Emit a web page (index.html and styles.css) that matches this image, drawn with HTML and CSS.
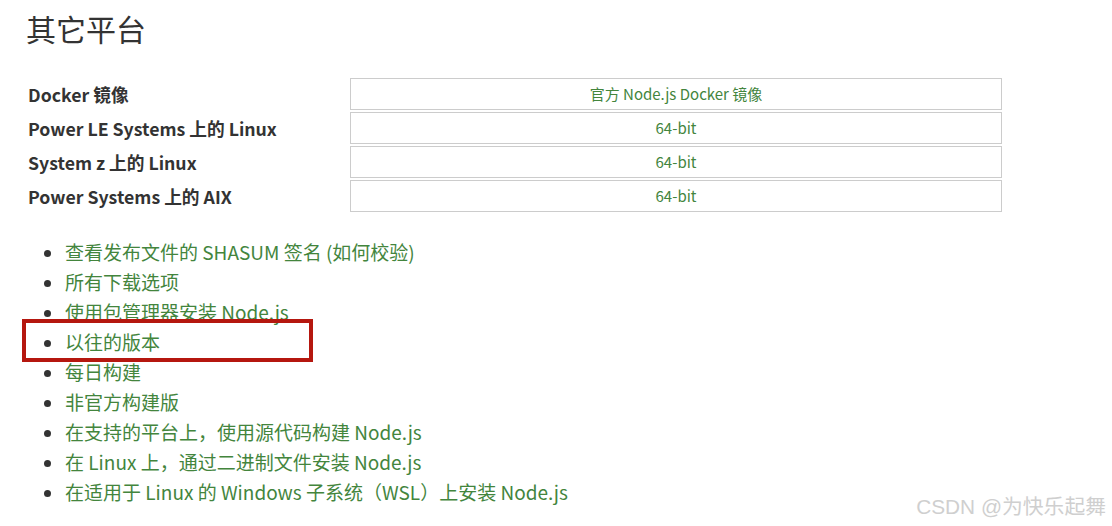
FILE: index.html
```html
<!DOCTYPE html>
<html lang="zh-CN">
<head>
  <meta charset="UTF-8" />
  <title>其它平台</title>
  <link rel="stylesheet" href="styles.css">
</head>
<body>
  <div class="page">
    <h1 class="title">其它平台</h1>

    <div class="platforms">
      <div class="label">Docker 镜像</div>
      <a class="cell" href="#">官方 Node.js Docker 镜像</a>

      <div class="label">Power LE Systems 上的 Linux</div>
      <a class="cell" href="#">64-bit</a>

      <div class="label">System z 上的 Linux</div>
      <a class="cell" href="#">64-bit</a>

      <div class="label">Power Systems 上的 AIX</div>
      <a class="cell" href="#">64-bit</a>
    </div>

    <ul class="links">
      <li><a href="#">查看发布文件的 SHASUM 签名 (如何校验)</a></li>
      <li><a href="#">所有下载选项</a></li>
      <li><a href="#">使用包管理器安装 Node.js</a></li>
      <li class="marked"><a href="#">以往的版本</a></li>
      <li><a href="#">每日构建</a></li>
      <li><a href="#">非官方构建版</a></li>
      <li><a href="#">在支持的平台上，使用源代码构建 Node.js</a></li>
      <li><a href="#">在 Linux 上，通过二进制文件安装 Node.js</a></li>
      <li><a href="#">在适用于 Linux 的 Windows 子系统（WSL）上安装 Node.js</a></li>
    </ul>
  </div>

  <div class="watermark">CSDN @为快乐起舞</div>
</body>
</html>
```

FILE: styles.css
```css
body {
  margin: 0;
  background-color: #fff;
  color: #333;
  font-family: "Noto Sans CJK SC", "Noto Sans", sans-serif;
}

a {
  color: #43853d;
  text-decoration: none;
}

.page {
  padding: 0 0 0 26px;
}

.title {
  margin: 0;
  padding-top: 8px;
  font-size: 30px;
  font-weight: 400;
  line-height: 40px;
  color: #333;
}

.platforms {
  display: grid;
  grid-template-columns: 324px 652px;
  row-gap: 2px;
  margin-top: 30px;
}

.label {
  padding-left: 2px;
  font-size: 17.7px;
  font-weight: 700;
  line-height: 32px;
}

.cell {
  display: block;
  height: 30px;
  line-height: 30px;
  border: 1px solid #ccc;
  text-align: center;
  font-size: 15px;
}

.links {
  margin: 25px 0 0;
  padding-left: 39px;
}

.links li {
  font-size: 19px;
  line-height: 30px;
}

.marked {
  position: relative;
}

.marked::before {
  content: "";
  position: absolute;
  left: -43px;
  top: -8px;
  width: 283px;
  height: 35px;
  border: 4px solid #b5170f;
}

.watermark {
  position: absolute;
  right: 6px;
  bottom: 6px;
  font-family: "Liberation Sans", "Noto Sans CJK SC", sans-serif;
  font-size: 20.8px;
  color: #cfcfcf;
}
```
